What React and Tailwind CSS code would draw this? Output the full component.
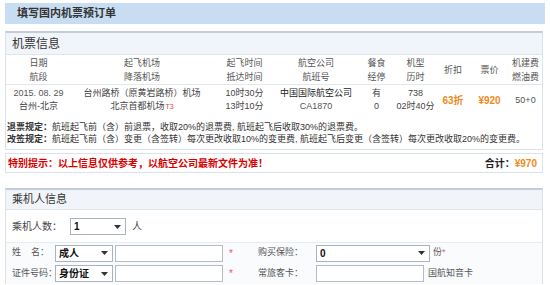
import React from "react";

const F = "font-['Liberation_Sans','Noto_Sans_CJK_SC',sans-serif]";

function Sel({ w, text, bold }) {
  return (
    <div
      className={`flex h-[17px] shrink-0 items-center justify-between border border-[#a9b3bf] bg-white pl-[3px] pr-[4px] ${w}`}
    >
      <span className={`whitespace-nowrap text-[10px] text-[#111] ${bold ? "font-bold" : ""}`}>{text}</span>
      <svg width="7" height="4" viewBox="0 0 7 4">
        <path d="M0 0h7L3.5 4z" fill="#333" />
      </svg>
    </div>
  );
}

function Inp({ w }) {
  return <div className={`h-[17px] shrink-0 border border-[#b4bcc6] bg-white ${w}`} />;
}

const cols = "grid grid-cols-[65px_142px_63px_80px_41px_37px_38px_35px_37px] whitespace-nowrap";

export default function App() {
  return (
    <div className={`${F} relative h-[285px] w-[550px] overflow-hidden bg-white px-[5px] pt-[3px] text-[#333]`}>
      <div className="flex h-[21px] items-center bg-[#c8ddf2] pl-[12px] text-[11px] font-bold text-[#333]">
        填写国内机票预订单
      </div>

      <div className="mt-[7px] w-[538px] border border-t-2 border-[#dbe2ea] border-t-[#c3ccd9]">
        <div className="flex h-[22px] items-center border-b border-[#dfe5ec] bg-[#f1f5f9] pl-[6px] text-[12px] text-[#333]">
          机票信息
        </div>
        <div className={`${cols} h-[30px] border-b border-[#e2e7ee] text-[9px] leading-[14px] text-[#555]`}>
          <div className="flex flex-col items-center justify-center"><span>日期</span><span>航段</span></div>
          <div className="flex flex-col items-center justify-center"><span>起飞机场</span><span>降落机场</span></div>
          <div className="flex flex-col items-center justify-center"><span>起飞时间</span><span>抵达时间</span></div>
          <div className="flex flex-col items-center justify-center"><span>航空公司</span><span>航班号</span></div>
          <div className="flex flex-col items-center justify-center"><span>餐食</span><span>经停</span></div>
          <div className="flex flex-col items-center justify-center"><span>机型</span><span>历时</span></div>
          <div className="flex items-center justify-center">折扣</div>
          <div className="flex items-center justify-center">票价</div>
          <div className="flex flex-col items-center justify-center"><span>机建费</span><span>燃油费</span></div>
        </div>
        <div className={`${cols} h-[30px] text-[9px] leading-[13px] text-[#444]`}>
          <div className="flex flex-col items-center justify-center"><span className="text-[#555]">2015. 08. 29</span><span>台州-北京</span></div>
          <div className="flex flex-col items-center justify-center">
            <span>台州路桥（原黄岩路桥）机场</span>
            <span>北京首都机场<span className="ml-[1px] text-[7px] text-[#e04040]">T3</span></span>
          </div>
          <div className="flex flex-col items-center justify-center"><span>10时30分</span><span>13时10分</span></div>
          <div className="flex flex-col items-center justify-center"><span className="text-[#222]">中国国际航空公司</span><span className="text-[#555]">CA1870</span></div>
          <div className="flex flex-col items-center justify-center"><span>有</span><span>0</span></div>
          <div className="flex flex-col items-center justify-center"><span>738</span><span>02时40分</span></div>
          <div className="flex items-center justify-center text-[10px] font-bold text-[#f08a1a]">63折</div>
          <div className="flex items-center justify-center text-[10px] font-bold text-[#f08a1a]">¥920</div>
          <div className="flex items-center justify-center text-[#555]">50+0</div>
        </div>
        <div className="whitespace-nowrap px-[1px] pb-[4px] pt-[6px] text-[9px] leading-[12px] text-[#333]">
          <div>
            <span className="font-bold">退票规定：</span>航班起飞前（含）前退票，收取20%的退票费, 航班起飞后收取30%的退票费。
          </div>
          <div>
            <span className="font-bold">改签规定：</span>航班起飞前（含）变更（含签转）每次更改收取10%的变更费, 航班起飞后变更（含签转）每次更改收取20%的变更费。
          </div>
        </div>
      </div>

      <div className="mt-[3px] flex h-[20px] w-[538px] items-center justify-between whitespace-nowrap border border-[#dbe2ea] px-[2px]">
        <span className="text-[10px] font-bold text-[#d90000]">特别提示：以上信息仅供参考，以航空公司最新文件为准！</span>
        <span className="pr-[3px] text-[10px] font-bold text-[#222]">
          合计：<span className="text-[#f08a1a]">¥970</span>
        </span>
      </div>

      <div className="mt-[15px] w-[538px] border border-b-0 border-t-2 border-[#dbe2ea] border-t-[#c3ccd9]">
        <div className="flex h-[20px] items-center border-b border-[#dfe5ec] bg-[#f1f5f9] pl-[6px] text-[11px] text-[#333]">
          乘机人信息
        </div>
        <div className="flex items-center whitespace-nowrap pb-[7px] pl-[6px] pt-[8px] text-[10px] text-[#444]">
          <span className="w-[58px]">乘机人数：</span>
          <Sel w="w-[56px]" text="1" bold />
          <span className="ml-[6px]">人</span>
        </div>
        <div className="whitespace-nowrap border-t border-[#e6ecf2] bg-[#f9fbfd] pl-[6px] text-[9px] text-[#555]">
          <div className="flex h-[20px] items-center">
            <span className="w-[43px] shrink-0 whitespace-pre">姓    名：</span>
            <Sel w="w-[58px]" text="成人" bold />
            <div className="ml-[2px]"><Inp w="w-[108px]" /></div>
            <span className="ml-[6px] w-[29px] shrink-0 text-[10px] text-[#e85a5a]">*</span>
            <span className="w-[58px] shrink-0">购买保险：</span>
            <Sel w="w-[114px]" text="0" bold />
            <span className="ml-[3px]">份<span className="text-[#e85a5a]">*</span></span>
          </div>
          <div className="flex h-[21px] items-center">
            <span className="w-[43px] shrink-0">证件号码：</span>
            <Sel w="w-[58px]" text="身份证" bold />
            <div className="ml-[2px]"><Inp w="w-[108px]" /></div>
            <span className="ml-[6px] w-[29px] shrink-0 text-[10px] text-[#e85a5a]">*</span>
            <span className="w-[58px] shrink-0">常旅客卡：</span>
            <Inp w="w-[108px]" />
            <span className="ml-[4px]">国航知音卡</span>
          </div>
        </div>
      </div>
    </div>
  );
}
